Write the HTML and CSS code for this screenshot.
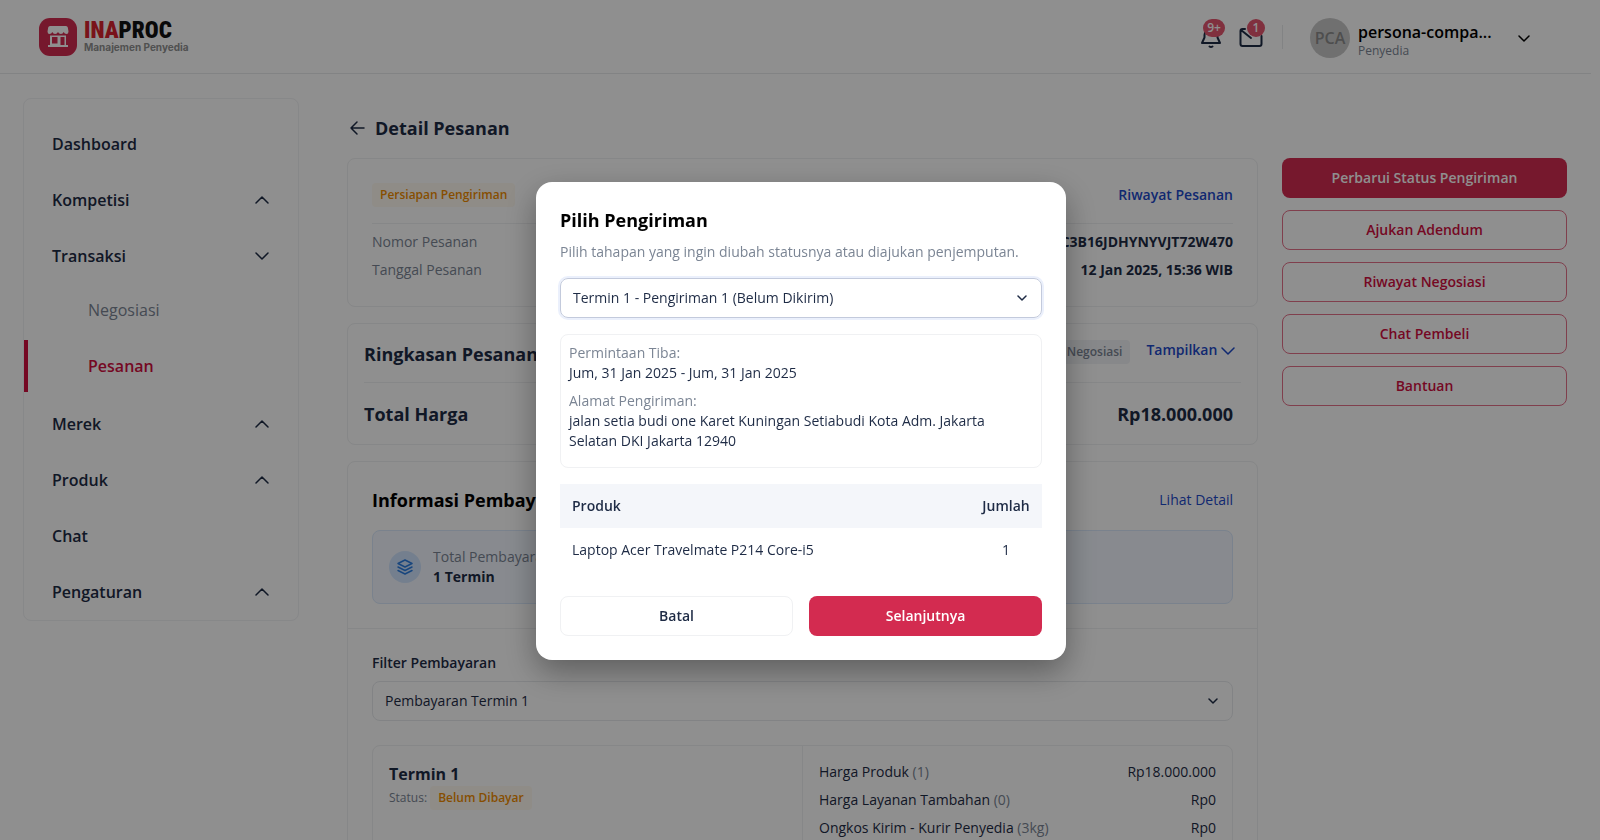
FILE: index.html
```html
<!DOCTYPE html>
<html lang="id">
<head>
	<meta charset="utf-8">
	<title>Detail Pesanan</title>
	<link rel="stylesheet" href="styles.css">
</head>
<body>
	<header class="header">
		<a class="logo" href="#">
			<svg class="logo-icon" viewBox="0 0 38 38" aria-hidden="true">
				<rect width="38" height="38" rx="11" fill="#d32b50"/>
				<path d="M11 8h16q1.500 0 1.800 1.500l.7 4q0 2.500-2 2.500t-2.800-2q-.8 2-2.800 2t-2.900-2q-.9 2-2.900 2t-2.800-2q-.8 2-2.800 2t-2-2.500l.700-4Q9.500 8 11 8z" fill="#fff"/>
				<path fill-rule="evenodd" d="M11 17.500h16V27h2v2H9v-2h2zM13 19v6.500h5.500V19zM21.500 19v8h4v-8z" fill="#fff"/>
			</svg>
			<span class="logo-text">
				<span class="logo-name"><b>INA</b>PROC</span>
				<span class="logo-sub">Manajemen Penyedia</span>
			</span>
		</a>
		<div class="header-right">
			<button class="icon-btn" aria-label="Notifikasi">
				<svg width="24" height="24" viewBox="0 0 24 24"><path d="M5.500 12.500V10a6.500 6.500 0 0 1 13 0v2.500M5.500 12.500L3 18h18l-2.500-5.500M10.500 21.500q1.500 1 3 0"/></svg>
				<span class="count count-wide">9+</span>
			</button>
			<button class="icon-btn" aria-label="Pesan">
				<svg width="24" height="24" viewBox="0 0 24 24"><path d="M6 4H3.500Q1.500 4 1.500 6v13q0 2 2 2h17q2 0 2-2V11M2 5l10 8"/></svg>
				<span class="count">1</span>
			</button>
			<span class="sep"></span>
			<button class="profile">
				<span class="avatar">PCA</span>
				<span class="profile-text">
					<span class="profile-name">persona-compa...</span>
					<span class="profile-role">Penyedia</span>
				</span>
				<svg class="chev" width="12" height="7" viewBox="0 0 12 7"><path d="M1 1l5 5 5-5"/></svg>
			</button>
		</div>
	</header>

	<div class="page">
		<nav class="sidebar">
			<a href="#">Dashboard</a>
			<a href="#">Kompetisi <svg width="14" height="8" viewBox="0 0 14 8"><path d="M1 7l6-6 6 6"/></svg></a>
			<a href="#">Transaksi <svg width="14" height="8" viewBox="0 0 14 8"><path d="M1 1l6 6 6-6"/></svg></a>
			<a class="sub" href="#">Negosiasi</a>
			<a class="sub active" href="#">Pesanan</a>
			<a href="#">Merek <svg width="14" height="8" viewBox="0 0 14 8"><path d="M1 7l6-6 6 6"/></svg></a>
			<a href="#">Produk <svg width="14" height="8" viewBox="0 0 14 8"><path d="M1 7l6-6 6 6"/></svg></a>
			<a href="#">Chat</a>
			<a href="#">Pengaturan <svg width="14" height="8" viewBox="0 0 14 8"><path d="M1 7l6-6 6 6"/></svg></a>
		</nav>

		<main class="content">
			<h1 class="page-title">
				<svg width="16" height="16" viewBox="0 0 16 16"><path d="M15 8H2M8 2L2 8l6 6"/></svg>
				Detail Pesanan
			</h1>
			<div class="columns">
				<div class="cards">
					<section class="card order">
						<div class="row order-head">
							<span class="tag">Persiapan Pengiriman</span>
							<a class="link strong" href="#">Riwayat Pesanan</a>
						</div>
						<div class="row">
							<span class="muted">Nomor Pesanan</span>
							<b>EP-01JHC3B16JDHYNYVJT72W470</b>
						</div>
						<div class="row">
							<span class="muted">Tanggal Pesanan</span>
							<b>12 Jan 2025, 15:36 WIB</b>
						</div>
					</section>

					<section class="card summary">
						<div class="row summary-head">
							<h2>Ringkasan Pesanan</h2>
							<div class="summary-right">
								<span class="tag tag-gray">Negosiasi</span>
								<a class="link strong" href="#">Tampilkan <svg width="14" height="8" viewBox="0 0 14 8"><path d="M1 1l6 6 6-6"/></svg></a>
							</div>
						</div>
						<div class="row summary-total">
							<h2>Total Harga</h2>
							<h2>Rp18.000.000</h2>
						</div>
					</section>

					<section class="card payment">
						<div class="payment-top">
							<div class="row">
								<h2 class="black">Informasi Pembayaran</h2>
								<a class="link" href="#">Lihat Detail</a>
							</div>
							<div class="info-blue">
								<span class="circle">
									<svg width="16" height="16" viewBox="0 0 16 16"><path d="M8 1l7 3.500L8 8 1 4.500zM1 8l7 3.500L15 8M1 11.500L8 15l7-3.500"/></svg>
								</span>
								<div>
									<p class="muted">Total Pembayaran</p>
									<p><b>1 Termin</b></p>
								</div>
							</div>
						</div>
						<div class="payment-bottom">
							<label for="filter">Filter Pembayaran</label>
							<div class="select">
								<select id="filter"><option>Pembayaran Termin 1</option></select>
								<svg width="10" height="6" viewBox="0 0 10 6"><path d="M1 1l4 4 4-4"/></svg>
							</div>
							<div class="termin">
								<div class="termin-left">
									<h3>Termin 1</h3>
									<p class="status">Status: <span class="tag">Belum Dibayar</span></p>
								</div>
								<div class="termin-right">
									<div class="row"><span>Harga Produk <i>(1)</i></span><span>Rp18.000.000</span></div>
									<div class="row"><span>Harga Layanan Tambahan <i>(0)</i></span><span>Rp0</span></div>
									<div class="row"><span>Ongkos Kirim - Kurir Penyedia <i>(3kg)</i></span><span>Rp0</span></div>
								</div>
							</div>
						</div>
					</section>
				</div>

				<aside class="actions">
					<button class="btn primary">Perbarui Status Pengiriman</button>
					<button class="btn outline">Ajukan Adendum</button>
					<button class="btn outline">Riwayat Negosiasi</button>
					<button class="btn outline">Chat Pembeli</button>
					<button class="btn outline">Bantuan</button>
				</aside>
			</div>
		</main>
	</div>

	<div class="overlay">
		<div class="modal" role="dialog" aria-labelledby="modal-title">
			<h2 id="modal-title" class="black">Pilih Pengiriman</h2>
			<label class="modal-desc" for="shipment">Pilih tahapan yang ingin diubah statusnya atau diajukan penjemputan.</label>
			<div class="select focus">
				<select id="shipment"><option>Termin 1 - Pengiriman 1 (Belum Dikirim)</option></select>
				<svg width="10" height="6" viewBox="0 0 10 6"><path d="M1 1l4 4 4-4"/></svg>
			</div>
			<dl class="address">
				<dt>Permintaan Tiba:</dt>
				<dd>Jum, 31 Jan 2025 - Jum, 31 Jan 2025</dd>
				<dt>Alamat Pengiriman:</dt>
				<dd>jalan setia budi one Karet Kuningan Setiabudi Kota Adm. Jakarta Selatan DKI Jakarta 12940</dd>
			</dl>
			<table class="products">
				<thead>
					<tr><th>Produk</th><th class="qty">Jumlah</th></tr>
				</thead>
				<tbody>
					<tr><td>Laptop Acer Travelmate P214 Core-i5</td><td class="qty">1</td></tr>
				</tbody>
			</table>
			<div class="modal-btns">
				<button class="btn plain">Batal</button>
				<button class="btn primary">Selanjutnya</button>
			</div>
		</div>
	</div>
</body>
</html>
```

FILE: styles.css
```css
*{ margin:0; padding:0; box-sizing:border-box; }
html,body{ height:100%; }
body{ font-family:"Open Sans", "Noto Sans", sans-serif; font-size:14px; line-height:20px; color:#1e2b45; background:#fff; overflow:hidden; }
a{ color:inherit; text-decoration:none; }
button,select{ font:inherit; color:inherit; background:none; border:0; }
svg{ fill:none; stroke:currentColor; stroke-width:1.5; stroke-linecap:round; stroke-linejoin:round; flex:none; }
h2{ font-size:18px; line-height:24px; font-weight:700; }
b{ font-weight:700; }
.black{ color:#000; }
.muted{ color:#7b8594; }
.row{ display:flex; align-items:center; justify-content:space-between; }

/* header */
.header{ display:flex; align-items:center; justify-content:space-between; height:74px; margin-right:9px; padding:0 61px 0 39px; border-bottom:1px solid #e8e9eb; }
.logo{ display:flex; align-items:center; gap:7px; }
.logo-icon{ width:38px; height:38px; stroke:none; }
.logo-text{ display:flex; flex-direction:column; }
.logo-name{ font:900 23px/20px "Liberation Sans Narrow", "Roboto Condensed", "Liberation Sans", sans-serif; color:#111; }
.logo-name b{ font-weight:900; color:#d8232f; }
.logo-sub{ font:700 10px/12px Inter, "Open Sans", sans-serif; color:#8f8f8f; }
.header-right{ display:flex; align-items:center; }
.icon-btn{ position:relative; width:24px; height:24px; margin-right:16px; }
.icon-btn svg{ display:block; stroke-width:2; }
.count{ position:absolute; top:-6px; right:-2px; min-width:18px; height:18px; padding:0 3px; border-radius:9px; background:#e5566f; color:#fff; font-size:12px; font-weight:600; line-height:18px; text-align:center; }
.count-wide{ min-width:22px; right:-2px; }
.sep{ width:1px; height:24px; margin:0 27px 0 3px; background:#e8e9eb; }
.profile{ display:flex; align-items:center; gap:8px; margin-top:3px; text-align:left; }
.avatar{ width:40px; height:40px; border-radius:50%; background:#c8c8c8; color:#8c8c8c; font-size:16px; font-weight:600; line-height:40px; text-align:center; }
.profile-text{ width:152px; padding-top:5px; }
.profile-name,.profile-role{ display:block; }
.profile-name{ font-size:16px; font-weight:600; color:#000; }
.profile-role{ font-size:12px; line-height:18px; color:#7b8594; }
.chev{ color:#000; }

.page{ display:flex; align-items:flex-start; gap:48px; padding:24px 33px 0 23px; }

/* sidebar */
.sidebar{ width:276px; flex:none; padding:17px 0 0; border:1px solid #f1f2f4; border-radius:8px; }
.sidebar a{ display:flex; align-items:center; justify-content:space-between; height:56px; padding:0 29px 0 28px; font-size:16px; font-weight:600; }
.sidebar a.sub{ height:52px; margin-bottom:4px; padding-left:60px; font-weight:400; color:#7b8594; border-left:4px solid transparent; }
.sidebar a.active{ color:#d10f3f; border-left-color:#d10f3f; font-weight:600; }

/* content */
.content{ flex:1; min-width:0; }
.page-title{ display:flex; align-items:center; gap:10px; padding:18px 0 18px 2px; font-size:18px; line-height:24px; }
.columns{ display:flex; align-items:flex-start; gap:24px; }
.cards{ flex:1; display:flex; flex-direction:column; gap:16px; min-width:0; }
.card{ border:1px solid #eff0f2; border-radius:8px; }
.tag{ display:inline-block; padding:2px 8px; border-radius:4px; background:#fffaf0; color:#f08c00; font-size:12px; line-height:20px; font-weight:600; }
.tag-gray{ background:#f1f3f6; color:#7b8594; }
.link{ color:#1d49c9; }
.strong{ font-weight:600; }

.order{ padding:24px 24px 18px; }
.order .row{ margin-bottom:8px; }
.order .order-head{ padding-bottom:16px; border-bottom:1px solid #eff0f2; }

.summary{ padding:16px; }
.summary-head{ align-items:flex-start; padding:0 6px 14px 0; border-bottom:1px solid #eff0f2; }
.summary-head h2{ line-height:28px; }
.summary-right{ display:flex; align-items:flex-start; gap:16px; }
.summary-total{ padding:19px 8px 2px 0; }

.payment-top{ padding:26px 24px 24px; border-bottom:1px solid #eff0f2; }
.info-blue{ display:flex; align-items:center; gap:12px; margin-top:18px; padding:16px; border:1px solid #d9e8fc; border-radius:8px; background:#f2f7ff; }
.circle{ display:flex; align-items:center; justify-content:center; width:32px; height:32px; border-radius:50%; background:#cfe3fd; color:#2b7de0; }
.payment-bottom{ padding:24px; }
.payment-bottom label{ display:block; margin-bottom:8px; font-weight:600; }

.select{ position:relative; }
.select select{ display:block; width:100%; height:40px; padding:0 12px; border:1px solid #e8eaed; border-radius:8px; appearance:none; }
.select svg{ position:absolute; right:15px; top:17px; pointer-events:none; }
.focus select{ border-color:#c3cadc; box-shadow:0 0 0 2px #ebf0fc; }

.termin{ display:flex; margin-top:24px; border:1px solid #eff0f2; border-radius:8px; }
.termin-left,.termin-right{ flex:1; padding:16px; }
.termin-right{ border-left:1px solid #eff0f2; }
.termin-right .row{ margin-bottom:8px; }
.termin-right i{ font-style:normal; color:#7b8594; }
.termin h3{ font-size:16px; line-height:24px; }
.status{ font-size:12px; color:#7b8594; }

/* buttons */
.actions{ width:285px; flex:none; display:flex; flex-direction:column; gap:12px; }
.btn{ height:40px; border-radius:8px; font-weight:600; text-align:center; }
.primary{ background:#d32b50; color:#fff; }
.outline{ border:1px solid #e4708a; color:#d10f3f; }
.plain{ border:1px solid #f0f1f3; }

/* modal */
.overlay{ position:fixed; inset:0; display:flex; align-items:center; justify-content:center; padding:2px 0 0 2px; background:rgba(0,0,0,.44); }
.modal{ width:530px; padding:24px; border-radius:16px; background:#fff; box-shadow:0 12px 32px rgba(0,0,0,.35); }
.modal h2{ line-height:28px; }
.modal-desc{ display:block; margin:8px 0 16px; color:#7b8594; }
.address{ margin:16px 0; padding:8px 8px 16px; border:1px solid #f0f1f3; border-radius:8px; }
.address dt{ color:#7b8594; }
.address dd + dt{ margin-top:8px; }
.products{ width:100%; border-collapse:collapse; }
.products th,.products td{ padding:12px; text-align:left; font-weight:400; }
.products th{ background:#f4f6fa; font-weight:600; }
.products .qty{ width:72px; text-align:center; }
.modal-btns{ display:grid; grid-template-columns:1fr 1fr; gap:16px; margin-top:24px; }
```
